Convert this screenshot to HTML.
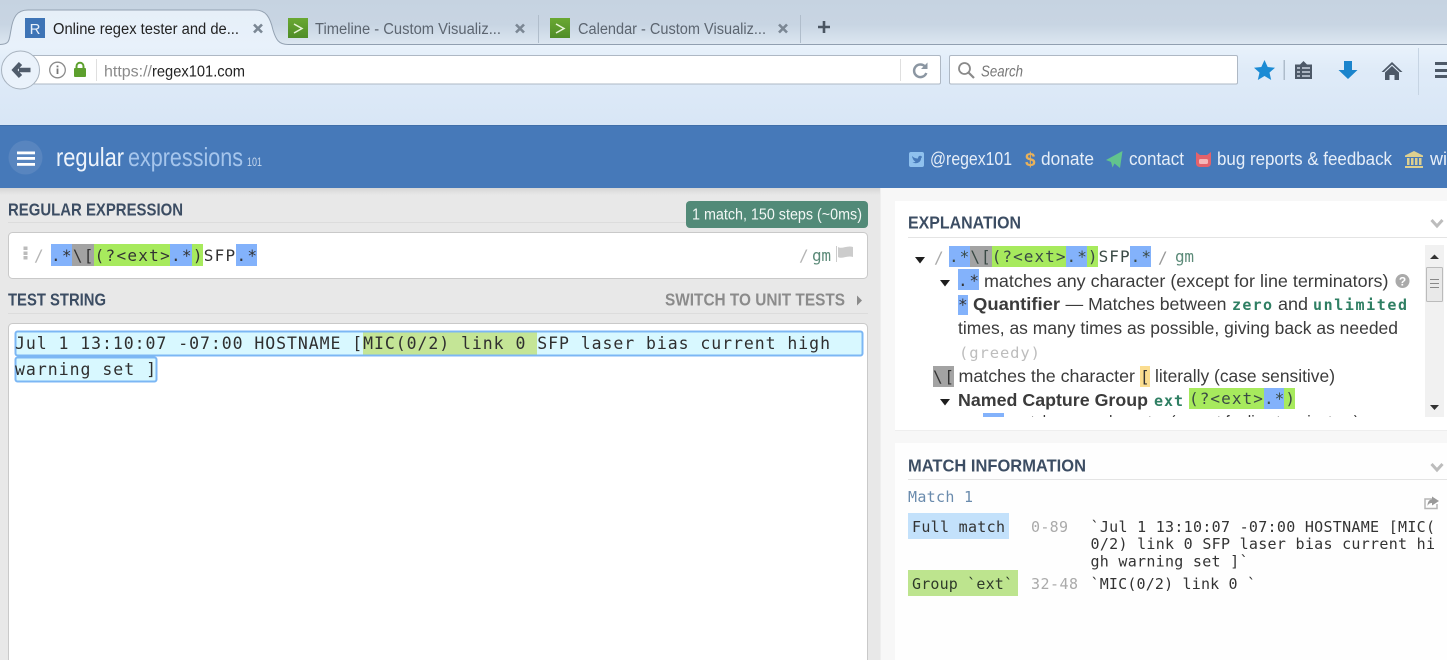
<!DOCTYPE html>
<html><head><meta charset="utf-8"><title>Online regex tester</title>
<style>
html,body{margin:0;padding:0;background:#fff;width:1447px;height:660px;overflow:hidden}
svg{display:block}
text{white-space:pre}
.s{font-family:"Liberation Sans",sans-serif}
.m{font-family:"DejaVu Sans Mono","Liberation Mono",monospace}
.h{font-family:"Liberation Sans",sans-serif;font-weight:bold;font-size:17.5px;fill:#3c4d63}
.e{font-family:"Liberation Sans",sans-serif;font-size:17.5px;fill:#3b3b3b}
.n{font-family:"Liberation Sans",sans-serif;font-size:18px;fill:#e6eef8}
</style></head><body>
<svg width="1447" height="660" viewBox="0 0 1447 660" xmlns="http://www.w3.org/2000/svg">
<defs>
<linearGradient id="strip" x1="0" y1="0" x2="0" y2="1"><stop offset="0" stop-color="#c6d3e1"/><stop offset=".55" stop-color="#c8d5e3"/><stop offset="1" stop-color="#dde7f1"/></linearGradient>
<linearGradient id="bar" x1="0" y1="0" x2="0" y2="1"><stop offset="0" stop-color="#e9f2fb"/><stop offset=".3" stop-color="#dfebf8"/><stop offset="1" stop-color="#d8e6f6"/></linearGradient>
<linearGradient id="tab" x1="0" y1="0" x2="0" y2="1"><stop offset="0" stop-color="#e6eff8"/><stop offset="1" stop-color="#e8f1fb"/></linearGradient>
<linearGradient id="shd" x1="0" y1="0" x2="0" y2="1"><stop offset="0" stop-color="#d6d6d6"/><stop offset="1" stop-color="#e8e8e8"/></linearGradient>
<linearGradient id="fav" x1="0" y1="0" x2="0" y2="1"><stop offset="0" stop-color="#6aa832"/><stop offset="1" stop-color="#4f8d28"/></linearGradient>
<clipPath id="expl"><rect x="900" y="240" width="524" height="177"/></clipPath>
</defs>

<!-- browser chrome -->
<rect width="1447" height="45" fill="url(#strip)"/>
<rect y="44" width="1447" height="1" fill="#919fb0"/>
<rect y="45" width="1447" height="80" fill="url(#bar)"/>
<path d="M0 44.500C10 44.500 9 40 11 30 13 17 17 10 28 10H255C266 10 270 17 273 30 276 40 279 44.500 288 44.500V47H0Z" fill="url(#tab)"/>
<path d="M0 44.500C10 44.500 9 40 11 30 13 17 17 10 28 10H255C266 10 270 17 273 30 276 40 279 44.500 288 44.500" fill="none" stroke="#94a2b2" stroke-width="1"/>
<rect x="25" y="18" width="20" height="20" fill="#3e74b6"/>
<text class="s" x="35" y="34" text-anchor="middle" font-size="15" fill="#e8f0fa">R</text>
<text class="s" x="53" y="34" font-size="15.500" fill="#222" textLength="186" lengthAdjust="spacingAndGlyphs">Online regex tester and de...</text>
<path d="M254 24.500L262 32.500M262 24.500L254 32.500" stroke="#7b8794" stroke-width="2.600"/>

<rect x="288" y="18" width="20" height="20" fill="url(#fav)"/>
<path d="M294 24L302 28.500 294 33" fill="none" stroke="#e8f4d8" stroke-width="1.500"/>
<text class="s" x="315" y="34" font-size="15.500" fill="#5c6570" textLength="186" lengthAdjust="spacingAndGlyphs">Timeline - Custom Visualiz...</text>
<path d="M516 24.500L524 32.500M524 24.500L516 32.500" stroke="#7b8794" stroke-width="2.600"/>
<rect x="538" y="15" width="1" height="28" fill="#b0bdcb"/>

<rect x="550" y="18" width="20" height="20" fill="url(#fav)"/>
<path d="M556 24L564 28.500 556 33" fill="none" stroke="#e8f4d8" stroke-width="1.500"/>
<text class="s" x="578" y="34" font-size="15.500" fill="#5c6570" textLength="188" lengthAdjust="spacingAndGlyphs">Calendar - Custom Visualiz...</text>
<path d="M779 24.500L787 32.500M787 24.500L779 32.500" stroke="#7b8794" stroke-width="2.600"/>
<rect x="800" y="15" width="1" height="28" fill="#b0bdcb"/>
<path d="M824 21V33M818 27H830" stroke="#4a5562" stroke-width="2.600"/>

<!-- url bar -->
<rect x="25.500" y="55.500" width="915" height="28.500" rx="1.500" fill="#fff" stroke="#aeb8c4"/>
<circle cx="20.500" cy="70" r="19" fill="#eaf2fb" stroke="#a8b3bf"/>
<path d="M30.500 70H19M20.500 63.500L14.500 70 20.500 76.500" fill="none" stroke="#505c6b" stroke-width="4.500"/>
<circle cx="57.500" cy="70" r="7.800" fill="none" stroke="#8b8b8b" stroke-width="1.300"/>
<rect x="56.600" y="68.500" width="1.800" height="5.500" fill="#777"/><rect x="56.600" y="65.500" width="1.800" height="1.800" fill="#777"/>
<path d="M76.500 69V66.500C76.500 61.500 83.500 61.500 83.500 66.500V69" fill="none" stroke="#5da02e" stroke-width="2"/>
<rect x="74" y="68" width="12" height="9" rx="1" fill="#5da02e"/>
<rect x="96" y="59" width="1" height="22" fill="#dfdfdf"/>
<text class="s" x="104" y="76.500" font-size="16" fill="#8a8a8a" textLength="48" lengthAdjust="spacingAndGlyphs">https://</text>
<text class="s" x="152" y="76.500" font-size="16" fill="#222" textLength="93" lengthAdjust="spacingAndGlyphs">regex101.com</text>
<rect x="900" y="59" width="1" height="22" fill="#dfdfdf"/>
<path d="M925 66.500A6.300 6.300 0 1 0 926.300 73" fill="none" stroke="#8b96a2" stroke-width="2.500"/>
<path d="M921 69H927.500V62.500Z" fill="#8b96a2"/>

<rect x="949.500" y="55.500" width="288" height="28.500" rx="1.500" fill="#fff" stroke="#aeb8c4"/>
<circle cx="964.500" cy="68.500" r="5.500" fill="none" stroke="#8a8a8a" stroke-width="1.800"/>
<path d="M968.500 72.500L974 78" stroke="#8a8a8a" stroke-width="2.200"/>
<text class="s" x="981" y="76.500" font-size="16" font-style="italic" fill="#777" textLength="42" lengthAdjust="spacingAndGlyphs">Search</text>

<!-- toolbar icons -->
<path d="M1264.500 60L1267.700 67 1275 67.700 1269.500 72.600 1271.200 80 1264.500 76 1257.800 80 1259.500 72.600 1254 67.700 1261.300 67Z" fill="#1b8bd4"/>
<rect x="1283.500" y="60" width="1.500" height="20" fill="#aebccb"/>
<path d="M1295 64.500H1300L1303.500 61 1307 64.500H1312V79H1295Z" fill="#4d5968"/>
<path d="M1302 68H1310M1302 72H1310M1302 76H1310M1297 68H1300M1297 72H1300M1297 76H1300" stroke="#e3ecf6" stroke-width="1.200"/>
<path d="M1344 61H1352V70H1357.500L1348 79 1338.500 70H1344Z" fill="#1b84cc"/>
<path d="M1392 62L1402.500 72H1400L1392 64.500 1384 72H1381.500Z" fill="#4d5968"/>
<path d="M1385 72.500L1392 66 1399 72.500V80H1394.500V75H1389.500V80H1385Z" fill="#4d5968"/>
<rect x="1418" y="48" width="1" height="47" fill="#c6d4e3"/>
<rect x="1435" y="62" width="12" height="3" fill="#4d5968"/><rect x="1435" y="69" width="12" height="3" fill="#4d5968"/><rect x="1435" y="75" width="12" height="3" fill="#4d5968"/>

<!-- site header -->
<rect y="125" width="1447" height="63" fill="#4679b9"/>
<rect y="125" width="1447" height="1" fill="#3f6ea9"/>
<circle cx="25.500" cy="157.500" r="17" fill="#5885bf"/>
<rect x="17" y="151.500" width="18" height="2.800" fill="#fff"/><rect x="17" y="157" width="18" height="2.800" fill="#fff"/><rect x="17" y="163" width="18" height="2.800" fill="#fff"/>
<text class="s" x="56" y="166" font-size="26" fill="#eef4fb" textLength="68" lengthAdjust="spacingAndGlyphs">regular</text>
<text class="s" x="128" y="166" font-size="26" fill="#a5c5ec" textLength="115" lengthAdjust="spacingAndGlyphs">expressions</text>
<text class="s" x="247" y="166" font-size="12" fill="#c6d8ee" textLength="15" lengthAdjust="spacingAndGlyphs">101</text>

<rect x="909" y="152" width="15" height="15" rx="2" fill="#8fc1ee"/>
<path d="M912 156C914 158 916 158.500 918 158.500 918 155.500 921 155 922 157L921 158.500C921 162 917 164.500 912.500 162.500 914 162.500 915 162 915.500 161.500 914 161 912.500 159 912 156Z" fill="#4679b9"/>
<text class="n" x="930" y="165" textLength="82" lengthAdjust="spacingAndGlyphs">@regex101</text>
<text class="s" x="1025" y="166" font-size="19" font-weight="bold" fill="#e9b15a">$</text>
<text class="n" x="1041" y="165" textLength="53" lengthAdjust="spacingAndGlyphs">donate</text>
<path d="M1122.500 151L1120 168 1114.500 163.500 1112.500 167.500 1111 162 1106 160Z" fill="#62c48d"/>
<text class="n" x="1129" y="165" textLength="55" lengthAdjust="spacingAndGlyphs">contact</text>
<path d="M1196 152L1200 155H1207L1211 152V163C1211 166 1209 167 1207 167H1200C1198 167 1196 166 1196 163Z" fill="#e4626b"/>
<rect x="1199" y="159" width="9" height="5" rx="1.500" fill="#f6b7b7"/>
<text class="n" x="1217" y="165" textLength="175" lengthAdjust="spacingAndGlyphs">bug reports &amp; feedback</text>
<path d="M1414 151L1423 155.500V157H1405V155.500Z" fill="#ddd08f"/>
<path d="M1407 158H1409.500V165H1407ZM1411 158H1413.500V165H1411ZM1415 158H1417.500V165H1415ZM1419 158H1421.500V165H1419ZM1405 166H1423V168H1405Z" fill="#ddd08f"/>
<text class="n" x="1430" y="165" textLength="17" lengthAdjust="spacingAndGlyphs">wi</text>

<!-- left pane -->
<rect y="188" width="880" height="472" fill="#e8e8e8"/>
<rect y="188" width="880" height="7" fill="url(#shd)"/>
<rect x="880" y="188" width="567" height="472" fill="#f7f7f7"/>
<rect x="880" y="188" width="1" height="472" fill="#eee"/>

<text class="h" x="8" y="215.500" textLength="175" lengthAdjust="spacingAndGlyphs">REGULAR EXPRESSION</text>
<rect x="8" y="222" width="860" height="1" fill="#dcdcdc"/>
<rect x="686" y="201" width="182" height="27" rx="4" fill="#528a78"/>
<text class="s" x="692" y="219.500" font-size="15.500" fill="#f2f7f5" textLength="170" lengthAdjust="spacingAndGlyphs">1 match, 150 steps (~0ms)</text>

<rect x="8.500" y="232.500" width="859" height="46" rx="4" fill="#fff" stroke="#c9c9c9"/>
<rect x="23.500" y="246.500" width="4" height="3.500" fill="#bbb"/><rect x="23.500" y="251.500" width="4" height="3.500" fill="#bbb"/><rect x="23.500" y="256" width="4" height="3.500" fill="#bbb"/>
<text class="m" x="34" y="261" font-size="16" fill="#b5b5b5">/</text>
<rect x="51" y="244" width="21" height="22" fill="#83b2fb"/>
<rect x="72" y="244" width="22" height="22" fill="#a3a3a3"/>
<rect x="94" y="244" width="76" height="22" fill="#a7ea5d"/>
<rect x="170" y="244" width="22" height="22" fill="#83b2fb"/>
<rect x="192" y="244" width="11" height="22" fill="#a7ea5d"/>
<rect x="236" y="244" width="21" height="22" fill="#83b2fb"/>
<text class="m" x="51" y="261" font-size="16" fill="#333" textLength="206">.*\[(?&lt;ext&gt;.*)SFP.*</text>
<text class="m" x="799" y="261" font-size="16" fill="#b5b5b5">/</text>
<text class="m" x="812" y="261" font-size="16" fill="#5b8a78" textLength="19">gm</text>
<path d="M836.500 246V262" stroke="#ccc"/><path d="M838 247C842 249.500 847 245 853 247V257C847 255 842 259.500 838 257Z" fill="#ccc"/>

<text class="h" x="8" y="305.500" textLength="98" lengthAdjust="spacingAndGlyphs">TEST STRING</text>
<text class="s" x="665" y="305.500" font-size="17.500" font-weight="bold" fill="#8b8b8b" textLength="180" lengthAdjust="spacingAndGlyphs">SWITCH TO UNIT TESTS</text>
<path d="M857 295.500L862 300.500 857 305.500Z" fill="#8b8b8b"/>
<rect x="8" y="313" width="860" height="1" fill="#dcdcdc"/>
<rect x="8.500" y="323.500" width="859" height="345" rx="4" fill="#fff" stroke="#c9c9c9"/>

<rect x="15.500" y="331.500" width="847" height="24" rx="2" fill="#d8f8ff" stroke="#7cb7f4" stroke-width="2"/>
<rect x="15.500" y="357.500" width="141" height="24" rx="2" fill="#d8f8ff" stroke="#7cb7f4" stroke-width="2"/>
<rect x="363" y="332.500" width="174" height="22" fill="#c4e596"/>
<text class="m" x="15" y="349" font-size="16.500" fill="#2f2f2f" textLength="815">Jul 1 13:10:07 -07:00 HOSTNAME [MIC(0/2) link 0 SFP laser bias current high</text>
<text class="m" x="15" y="375" font-size="16.500" fill="#2f2f2f" textLength="141">warning set ]</text>

<!-- explanation card -->
<rect x="895" y="201" width="552" height="229" fill="#fff"/>
<rect x="895" y="430" width="552" height="1" fill="#eee"/>
<text class="h" x="908" y="228.500" textLength="113" lengthAdjust="spacingAndGlyphs">EXPLANATION</text>
<rect x="908" y="237" width="539" height="1" fill="#e4e4e4"/>
<path d="M1431.500 220L1437 226 1442.500 220" fill="none" stroke="#bcbcbc" stroke-width="3"/>

<path d="M915 257H925L920 263.500Z" fill="#1e1e1e"/>
<text class="m" x="934" y="263" font-size="16" fill="#aaa">/</text>
<rect x="949" y="246" width="21" height="21" fill="#83b2fb"/>
<rect x="970" y="246" width="22" height="21" fill="#a3a3a3"/>
<rect x="992" y="246" width="74" height="21" fill="#a7ea5d"/>
<rect x="1066" y="246" width="21" height="21" fill="#83b2fb"/>
<rect x="1087" y="246" width="11" height="21" fill="#a7ea5d"/>
<rect x="1130" y="246" width="21" height="21" fill="#83b2fb"/>
<text class="m" x="949" y="262" font-size="16" fill="#3a4a45" textLength="202">.*\[(?&lt;ext&gt;.*)SFP.*</text>
<text class="m" x="1158" y="263" font-size="16" fill="#999">/</text>
<text class="m" x="1175" y="262" font-size="16" fill="#5b8a78" textLength="19">gm</text>

<path d="M940 280H950L945 286.500Z" fill="#1e1e1e"/>
<rect x="958" y="269" width="21" height="21" fill="#83b2fb"/>
<text class="m" x="958" y="286" font-size="16" fill="#333" textLength="21">.*</text>
<text class="e" x="984" y="287" textLength="404.500" lengthAdjust="spacingAndGlyphs">matches any character (except for line terminators)</text>
<circle cx="1402.500" cy="281" r="7" fill="#aaa"/>
<text class="s" x="1402.500" y="285.500" text-anchor="middle" font-size="12" font-weight="bold" fill="#fff">?</text>

<rect x="958" y="295" width="10" height="20" fill="#83b2fb"/>
<text class="m" x="958" y="310" font-size="16" fill="#333">*</text>
<text class="e" x="973" y="310" font-weight="bold" textLength="87" lengthAdjust="spacingAndGlyphs">Quantifier</text>
<text class="e" x="1065.500" y="310" textLength="161" lengthAdjust="spacingAndGlyphs">— Matches between</text>
<text class="m" x="1232" y="310" font-size="15" font-weight="bold" fill="#2f7f63" textLength="40">zero</text>
<text class="e" x="1278" y="310" textLength="30" lengthAdjust="spacingAndGlyphs">and</text>
<text class="m" x="1313" y="310" font-size="15" font-weight="bold" fill="#2f7f63" textLength="94">unlimited</text>

<text class="e" x="958" y="334" textLength="440" lengthAdjust="spacingAndGlyphs">times, as many times as possible, giving back as needed</text>
<text class="m" x="959" y="358" font-size="15.500" fill="#bdbdbd" textLength="81">(greedy)</text>

<rect x="933" y="366" width="21" height="21" fill="#a3a3a3"/>
<text class="m" x="933" y="382" font-size="16" fill="#333" textLength="21">\[</text>
<text class="e" x="958.500" y="382" textLength="176.500" lengthAdjust="spacingAndGlyphs">matches the character</text>
<rect x="1140" y="366" width="10" height="21" fill="#fbdd90"/>
<text class="m" x="1140" y="382" font-size="16" fill="#333">[</text>
<text class="e" x="1155" y="382" textLength="180" lengthAdjust="spacingAndGlyphs">literally (case sensitive)</text>

<path d="M940 399H950L945 405.500Z" fill="#1e1e1e"/>
<text class="e" x="958" y="406" font-weight="bold" textLength="190" lengthAdjust="spacingAndGlyphs">Named Capture Group</text>
<text class="m" x="1154" y="406" font-size="15" font-weight="bold" fill="#2f7f63" textLength="29">ext</text>
<rect x="1189" y="388" width="75" height="21" fill="#a7ea5d"/>
<rect x="1264" y="388" width="20" height="21" fill="#83b2fb"/>
<rect x="1284" y="388" width="11" height="21" fill="#a7ea5d"/>
<text class="m" x="1189" y="404" font-size="16" fill="#3a4a45" textLength="106">(?&lt;ext&gt;.*)</text>

<g clip-path="url(#expl)">
<rect x="983" y="413" width="21" height="21" fill="#83b2fb"/>
<text class="e" x="1009" y="428" textLength="350" lengthAdjust="spacingAndGlyphs">matches any character (except for line terminators)</text>
</g>

<!-- scrollbar -->
<rect x="1425" y="245" width="19" height="172" fill="#f1f1f1"/>
<path d="M1430 259H1439L1434.500 254.500Z" fill="#333"/>
<path d="M1430 405H1439L1434.500 410Z" fill="#333"/>
<rect x="1426.500" y="267.500" width="16" height="34" rx="1" fill="#e9e9e9" stroke="#bbb"/>
<path d="M1430 279.500H1439M1430 283.500H1439M1430 287.500H1439" stroke="#888" stroke-width="1"/>

<!-- match information card -->
<rect x="895" y="443" width="552" height="217" fill="#fefefe"/>
<text class="h" x="908" y="471.500" textLength="178" lengthAdjust="spacingAndGlyphs">MATCH INFORMATION</text>
<rect x="908" y="479" width="539" height="1" fill="#e4e4e4"/>
<path d="M1431.500 464L1437 470 1442.500 464" fill="none" stroke="#bcbcbc" stroke-width="3"/>
<text class="m" x="908" y="502" font-size="15" fill="#6a8bad" textLength="65">Match 1</text>
<path d="M1432 499H1425V508.500H1437V504" fill="none" stroke="#b5b5b5" stroke-width="1.500"/>
<path d="M1432 496.500L1439 501 1432 505.500V503C1429.500 503 1428.500 504 1427.500 506 1427.500 501.500 1429.500 499.500 1432 499.500Z" fill="#9a9a9a"/>

<rect x="908" y="513" width="101" height="26" fill="#c3e1fb"/>
<text class="m" x="912" y="532" font-size="15" fill="#333" textLength="93">Full match</text>
<text class="m" x="1031" y="532" font-size="15" fill="#aaa" textLength="37">0-89</text>
<text class="m" x="1090.500" y="532" font-size="15" fill="#333" textLength="344.500">`Jul 1 13:10:07 -07:00 HOSTNAME [MIC(</text>
<text class="m" x="1090.500" y="549" font-size="15" fill="#333" textLength="344.500">0/2) link 0 SFP laser bias current hi</text>
<text class="m" x="1090.500" y="566.500" font-size="15" fill="#333" textLength="158">gh warning set ]`</text>

<rect x="908" y="570" width="110" height="26" fill="#bde48e"/>
<text class="m" x="912" y="589" font-size="15" fill="#2f3a2a" textLength="101">Group `ext`</text>
<text class="m" x="1031" y="589" font-size="15" fill="#aaa" textLength="47">32-48</text>
<text class="m" x="1090.500" y="589" font-size="15" fill="#333" textLength="165.500">`MIC(0/2) link 0 `</text>
</svg>
</body></html>
